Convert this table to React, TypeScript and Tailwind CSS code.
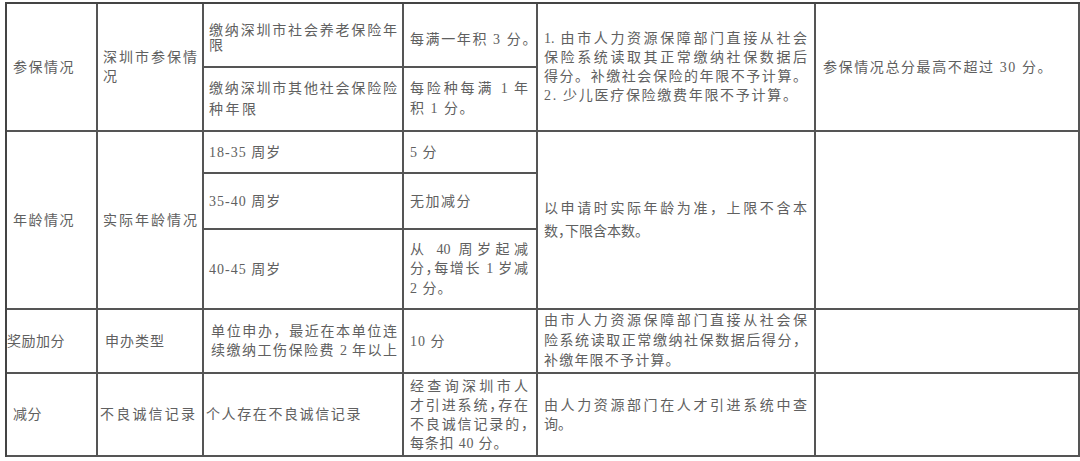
import React from "react";

// 深圳人才引进积分表（参保 / 年龄 / 奖励 / 减分部分）

function J({ children }: { children: React.ReactNode }) {
  // 整行两端对齐
  return <div className="text-justify [text-align-last:justify]">{children}</div>;
}

function L({ children, className = "" }: { children: React.ReactNode; className?: string }) {
  return <div className={`whitespace-nowrap ${className}`}>{children}</div>;
}

const cell = "border-r-2 border-b-2 border-[#555] align-middle";

export default function App() {
  return (
    <div
      lang="zh-CN"
      className="w-[1080px] h-[461px] bg-white overflow-hidden font-['Liberation_Serif','Noto_Sans_CJK_SC',serif] text-[14px] text-[#606060]"
    >
      <table className="ml-[5px] mt-[2px] w-[1075px] table-fixed border-separate border-spacing-0 border-t-2 border-l-2 border-[#444]">
        <colgroup>
          <col className="w-[91px]" />
          <col className="w-[106px]" />
          <col className="w-[200px]" />
          <col className="w-[134px]" />
          <col className="w-[278px]" />
          <col className="w-[264px]" />
        </colgroup>
        <tbody>
          {/* 参保情况 */}
          <tr className="h-[64px]">
            <td rowSpan={2} className={`${cell} pl-[6px] tracking-[1.5px]`}>
              <L>参保情况</L>
            </td>
            <td rowSpan={2} className={`${cell} px-[5px] leading-[19px]`}>
              <J>深圳市参保情</J>
              <L className="tracking-[1.5px]">况</L>
            </td>
            <td className={`${cell} pl-[5px] pr-[5px] pt-[6px] leading-[15px]`}>
              <J>缴纳深圳市社会养老保险年</J>
              <L>限</L>
            </td>
            <td className={`${cell} pl-[6px] pr-[8px] pt-[8px] tracking-[1.6px]`}>
              <L>每满一年积 3 分。</L>
            </td>
            <td rowSpan={2} className={`${cell} pl-[6px] pr-[7px] leading-[19px]`}>
              <J>1. 由市人力资源保障部门直接从社会</J>
              <J>保险系统读取其正常缴纳社保数据后</J>
              <J>得分。补缴社会保险的年限不予计算。</J>
              <L className="tracking-[1.7px]">2. 少儿医疗保险缴费年限不予计算。</L>
            </td>
            <td rowSpan={2} className={`${cell} pl-[7px] tracking-[1.6px]`}>
              <L>参保情况总分最高不超过 30 分。</L>
            </td>
          </tr>
          <tr className="h-[64px]">
            <td className={`${cell} px-[5px] leading-[21px]`}>
              <J>缴纳深圳市其他社会保险险</J>
              <L className="tracking-[2.5px]">种年限</L>
            </td>
            <td className={`${cell} pl-[6px] pr-[8px] leading-[20px]`}>
              <J>每险种每满 1 年</J>
              <L className="tracking-[1.5px]">积 1 分。</L>
            </td>
          </tr>

          {/* 年龄情况 */}
          <tr className="h-[42px]">
            <td rowSpan={3} className={`${cell} pl-[6px] tracking-[1.5px]`}>
              <L>年龄情况</L>
            </td>
            <td rowSpan={3} className={`${cell} px-[5px]`}>
              <J>实际年龄情况</J>
            </td>
            <td className={`${cell} pl-[5px] tracking-[1px]`}>
              <L>18-35 周岁</L>
            </td>
            <td className={`${cell} pl-[6px] tracking-[1px]`}>
              <L>5 分</L>
            </td>
            <td rowSpan={3} className={`${cell} pl-[6px] pr-[7px] leading-[23px]`}>
              <J>以申请时实际年龄为准，上限不含本</J>
              <L className="[font-feature-settings:'halt']">数，下限含本数。</L>
            </td>
            <td rowSpan={3} className={cell}></td>
          </tr>
          <tr className="h-[56px]">
            <td className={`${cell} pl-[5px] tracking-[1px]`}>
              <L>35-40 周岁</L>
            </td>
            <td className={`${cell} pl-[6px] tracking-[1.5px]`}>
              <L>无加减分</L>
            </td>
          </tr>
          <tr className="h-[80px]">
            <td className={`${cell} pl-[5px] tracking-[1px]`}>
              <L>40-45 周岁</L>
            </td>
            <td className={`${cell} pl-[6px] pr-[8px] leading-[19.5px]`}>
              <J>从 40 周岁起减</J>
              <J>
                <span className="[font-feature-settings:'halt']">分，</span>每增长 1 岁减
              </J>
              <L className="tracking-[1px]">2 分。</L>
            </td>
          </tr>

          {/* 奖励加分 */}
          <tr className="h-[64px]">
            <td className={`${cell} pl-0 tracking-[0.5px]`}>
              <L>奖励加分</L>
            </td>
            <td className={`${cell} pl-[7px] tracking-[1px]`}>
              <L>申办类型</L>
            </td>
            <td className={`${cell} pl-[7px] pr-[5px] leading-[19px]`}>
              <J>单位申办，最近在本单位连</J>
              <J>续缴纳工伤保险费 2 年以上</J>
            </td>
            <td className={`${cell} pl-[6px] tracking-[1px]`}>
              <L>10 分</L>
            </td>
            <td className={`${cell} pl-[6px] pr-[7px] leading-[20px]`}>
              <J>由市人力资源保障部门直接从社会保</J>
              <J>险系统读取正常缴纳社保数据后得分，</J>
              <L className="tracking-[1.2px]">补缴年限不予计算。</L>
            </td>
            <td className={cell}></td>
          </tr>

          {/* 减分 */}
          <tr className="h-[83px]">
            <td className={`${cell} pl-[6px] tracking-[0.5px]`}>
              <L>减分</L>
            </td>
            <td className={`${cell} pl-[2px] pr-[7px]`}>
              <J>不良诚信记录</J>
            </td>
            <td className={`${cell} pl-[2px] tracking-[1.6px]`}>
              <L>个人存在不良诚信记录</L>
            </td>
            <td className={`${cell} pl-[6px] pr-[8px] leading-[19px]`}>
              <J>经查询深圳市人</J>
              <J>
                才引进系统<span className="[font-feature-settings:'halt']">，</span>存在
              </J>
              <J>
                不良诚信记录的<span className="[font-feature-settings:'halt']">，</span>
              </J>
              <L className="tracking-[0.8px]">每条扣 40 分。</L>
            </td>
            <td className={`${cell} pl-[6px] pr-[7px] leading-[19px]`}>
              <J>由人力资源部门在人才引进系统中查</J>
              <L>询。</L>
            </td>
            <td className={cell}></td>
          </tr>
        </tbody>
      </table>
    </div>
  );
}
